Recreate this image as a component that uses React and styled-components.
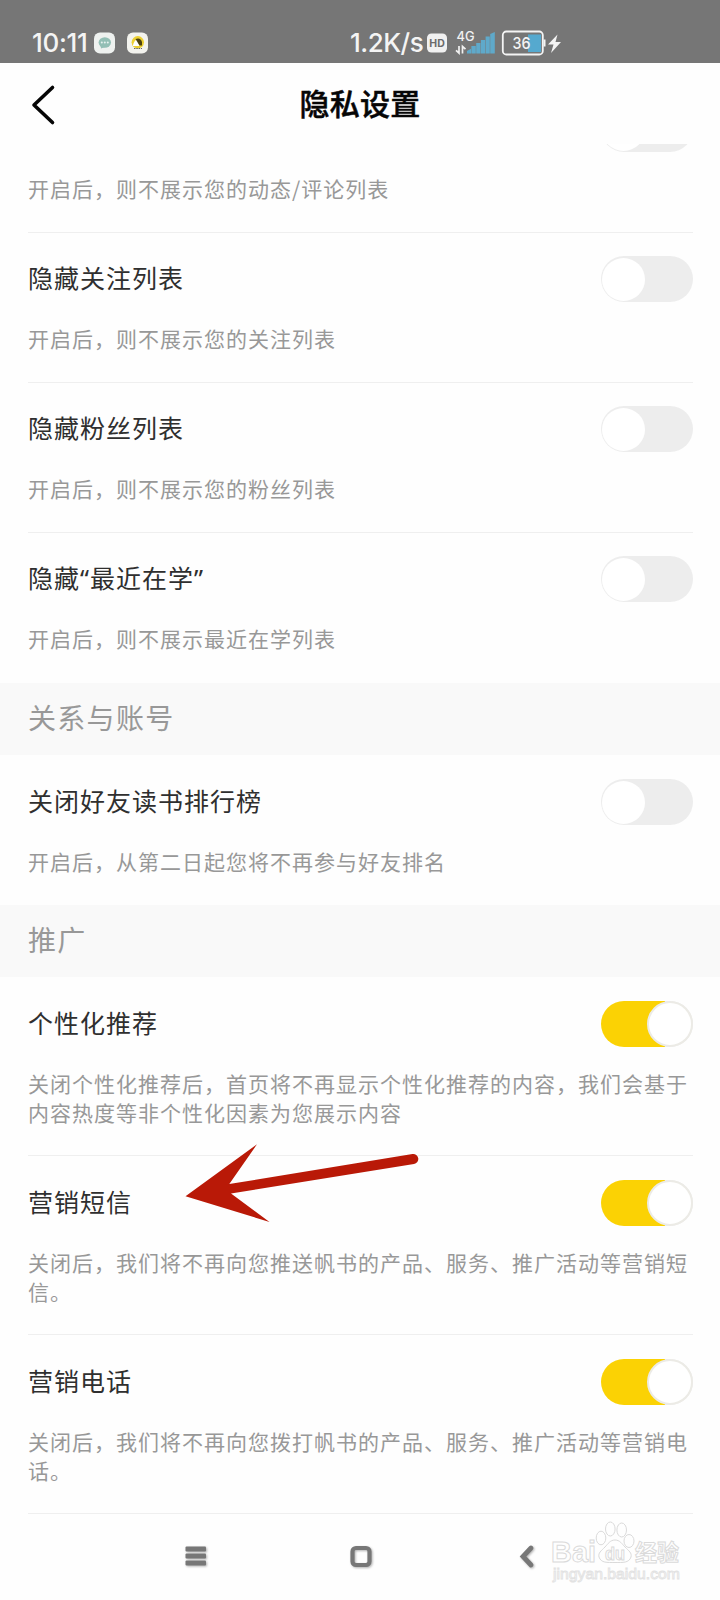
import React from 'react'
import styled, { createGlobalStyle } from 'styled-components'

const GlobalStyle = createGlobalStyle`
  * {
    box-sizing: border-box;
  }
  body {
    margin: 0;
    background: #fefefe;
    font-family: "Noto Sans CJK SC", "Noto Sans", sans-serif;
  }
`;

const Screen = styled.div`
  position: relative;
  display: flex;
  flex-direction: column;
  width: 720px;
  height: 1600px;
  overflow: hidden;
`;

const StatusBar = styled.div`
  display: flex;
  align-items: center;
  height: 63px;
  padding: 22px 0 0 32px;
  background: #767676;
  color: #f4f4f4;
  flex: none;
`;

const StatusText = styled.span`
  width: ${({ $width }) => $width}px;
  margin-left: ${({ $gap }) => $gap || 0}px;
  font-family: Inter, sans-serif;
  font-size: 26px;
  font-weight: 500;
  line-height: 40px;
  letter-spacing: ${({ $spacing }) => $spacing || 0}px;
  white-space: nowrap;
`;

const StatusIcons = styled.svg`
  display: block;
  font-family: Inter, sans-serif;
`;

const Header = styled.header`
  display: grid;
  grid-template-columns: 54px 1fr 54px;
  align-items: center;
  height: 81px;
  padding: 0 30px;
  flex: none;

  h1 {
    margin: 0;
    padding-bottom: 4px;
    color: #060606;
    font-size: 30px;
    font-weight: 500;
    line-height: 44px;
    letter-spacing: 0.3px;
    text-align: center;
    -webkit-text-stroke: 0.5px #060606;
  }
`;

const BackButton = styled.button`
  padding: 2px 0 0;
  border: 0;
  background: none;
  line-height: 0;
  text-align: left;
`;

const Viewport = styled.main`
  flex: 1;
  overflow: hidden;
`;

// the list is scrolled down, its first row is half under the header
const List = styled.div`
  margin-top: -61px;
`;

const Group = styled.div`
  --row-top: ${({ $top }) => $top || 24}px;
`;

const Row = styled.section`
  padding: 0 27px 0 28px;
`;

const RowBody = styled.div`
  padding-top: var(--row-top);
  height: ${({ $tall }) => ($tall ? 179 : 150)}px;
  border-bottom: 1px solid ${({ $last }) => ($last ? 'transparent' : '#efefef')};
`;

const RowTop = styled.div`
  display: flex;
  align-items: center;
  justify-content: space-between;
  height: 46px;
`;

const Label = styled.div`
  padding-bottom: 2px;
  color: #2f2f2f;
  font-family: "Noto Sans", "Noto Sans CJK SC", sans-serif;
  font-size: 25px;
  line-height: 36px;
  letter-spacing: 1px;
`;

const Note = styled.p`
  margin: 22px -10px 0 0;
  color: #989898;
  font-size: 21px;
  line-height: 28.7px;
  letter-spacing: 1px;
`;

const Track = styled.button`
  display: flex;
  align-items: center;
  justify-content: ${({ $on }) => ($on ? 'flex-end' : 'flex-start')};
  width: 92px;
  height: 46px;
  padding: 0 ${({ $on }) => ($on ? 0 : 1)}px;
  border: 0;
  border-radius: 23px;
  background: ${({ $on }) => ($on ? 'linear-gradient(90deg, #fbd204 70%, #ececec 70%)' : '#ededed')};
`;

const Knob = styled.span`
  width: ${({ $on }) => ($on ? 46 : 43)}px;
  height: ${({ $on }) => ($on ? 46 : 43)}px;
  border: ${({ $on }) => ($on ? '2px solid #ecebe6' : '0')};
  border-radius: 50%;
  background: #fff;
`;

const SectionTitle = styled.h2`
  height: 72px;
  margin: 0;
  padding: 0 28px;
  background: #f9f9f9;
  color: #989898;
  font-size: 28px;
  font-weight: 400;
  line-height: 68px;
  letter-spacing: 1.3px;
`;

const NavBar = styled.nav`
  position: absolute;
  left: 0;
  right: 0;
  bottom: 0;
  display: flex;
  height: 84px;
  padding: 27px 0 0 183px;

  svg {
    filter: drop-shadow(1px 1px 1px rgba(0, 0, 0, 0.3));
  }
`;

const NavIcon = styled.svg`
  width: 26px;
  height: 28px;
  margin-right: ${({ $gap }) => $gap || 0}px;
`;

const Arrow = styled.svg`
  position: absolute;
  left: 180px;
  top: 1138px;
`;

const Watermark = styled.svg`
  position: absolute;
  left: 546px;
  top: 1515px;
  font-family: "Liberation Sans", "Noto Sans CJK SC", sans-serif;
  font-weight: 700;
`;

function Toggle({ on }) {
  return (
    <Track $on={on} type="button" role="switch" aria-checked={!!on}>
      <Knob $on={on} />
    </Track>
  )
}

function Setting({ label, note, on, tall, last }) {
  return (
    <Row>
      <RowBody $tall={tall} $last={last}>
        <RowTop>
          <Label>{label}</Label>
          <Toggle on={on} />
        </RowTop>
        <Note>{note}</Note>
      </RowBody>
    </Row>
  )
}

function AppBadges() {
  return (
    <StatusIcons width="56" height="24" viewBox="93 30.5 56 24">
      <rect x="94" y="32" width="21" height="21" rx="6" fill="#eef1ef" />
      <ellipse cx="104.8" cy="42" rx="6.2" ry="5.2" fill="#93bfb5" />
      <path d="M100.5 44.500l0.500 3.500 4-1.500z" fill="#93bfb5" />
      <g fill="#e6f2ef">
        <circle cx="101.800" cy="42" r="1" />
        <circle cx="104.800" cy="42" r="1" />
        <circle cx="107.800" cy="42" r="1" />
      </g>
      <rect x="127" y="32" width="21" height="21" rx="6" fill="#f3f3ee" />
      <circle cx="137.800" cy="41.800" r="6.200" fill="#ecd032" />
      <path d="M132.800 45.500q1-5 4.200-7l2.500 7z" fill="#fff" />
      <path d="M135.500 38.500q5-2 6.500 3l0 3.500-2.500 0z" fill="#4c4210" />
      <path d="M134 48h8" stroke="#6b6b60" strokeWidth="1.200" strokeDasharray="1.500 0.800" />
    </StatusIcons>
  )
}

function SignalAndBattery() {
  return (
    <StatusIcons width="140" height="28" viewBox="425 28.500 140 28">
      <rect x="427" y="33" width="20" height="19" rx="4.500" fill="#f1f1f1" />
      <text x="437" y="46.300" fontSize="10.500" fontWeight="700" textAnchor="middle" fill="#6b6b6b">HD</text>
      <text x="456.500" y="40.500" fontSize="13" fontWeight="500" fill="#f1f1f1" textLength="18" lengthAdjust="spacingAndGlyphs">4G</text>
      <path d="M459 45.500v7l-3-2.700M462.500 53v-7l3 2.700" fill="none" stroke="#f1f1f1" strokeWidth="1.700" />
      <g fill="#5fa9ca">
        <path d="M467 50.500l4-2.300v4.800h-4z" />
        <rect x="471.400" y="45.500" width="4.400" height="7.500" />
        <rect x="476.200" y="42.500" width="4.300" height="10.500" />
        <rect x="480.900" y="39.500" width="4.300" height="13.500" />
        <rect x="485.600" y="36" width="4.200" height="17" />
        <path d="M490.200 33.500l4.600-2v21.500h-4.600z" />
      </g>
      <rect x="528" y="34" width="13" height="17.500" fill="#55a9cf" />
      <rect x="502.800" y="31" width="40" height="23" rx="3.500" fill="none" stroke="#f4f4f4" strokeWidth="1.800" />
      <path d="M544.500 39v7" stroke="#f4f4f4" strokeWidth="2" />
      <text x="512.500" y="48.800" fontSize="16.500" fontWeight="500" fill="#f4f4f4" textLength="18" lengthAdjust="spacingAndGlyphs">36</text>
      <path d="M557.500 34l-9.500 10h5.500l-2.500 8.500 10-11h-5.500z" fill="#f4f4f4" />
    </StatusIcons>
  )
}

function BaiduMark() {
  return (
    <Watermark width="150" height="80" viewBox="546 1515 150 80" fill="#fefefe" stroke="#dadada" strokeWidth="1">
      <text x="551" y="1562" fontSize="30" textLength="45" lengthAdjust="spacingAndGlyphs">Bai</text>
      <path d="M615 1540c-5 0-7 4-10 7-4 4-7 6-6 10 2 6 8 5.500 16 5.500s14 0.500 16-5.500c1-4-2-6-6-10-3-3-5-7-10-7z" />
      <ellipse cx="601" cy="1538" rx="4.800" ry="6.800" />
      <ellipse cx="610.300" cy="1529" rx="4.800" ry="7" />
      <ellipse cx="621.700" cy="1530" rx="4.800" ry="7" />
      <ellipse cx="629" cy="1541" rx="5" ry="6.500" />
      <text x="605" y="1560" fontSize="18" textLength="20" lengthAdjust="spacingAndGlyphs">du</text>
      <text x="635" y="1561" fontSize="23" textLength="44" lengthAdjust="spacingAndGlyphs">经验</text>
      <text x="553" y="1579" fontSize="15.500" fontWeight="400" stroke="#e2e2e2" strokeWidth="0.900" textLength="127" lengthAdjust="spacingAndGlyphs">jingyan.baidu.com</text>
    </Watermark>
  )
}

export default function App() {
  return (
    <Screen>
      <GlobalStyle />
      <StatusBar>
        <StatusText $width={61} $spacing={-0.3}>10:11</StatusText>
        <AppBadges />
        <StatusText $gap={201} $width={75} $spacing={-0.5}>1.2K/s</StatusText>
        <SignalAndBattery />
      </StatusBar>

      <Header>
        <BackButton type="button" aria-label="返回">
          <svg width="28" height="42" viewBox="30 84 28 42" fill="none" stroke="#060606" strokeWidth="3.600" strokeLinecap="round" strokeLinejoin="round">
            <path d="M52.500 87.500L34 105l18.500 17.500" />
          </svg>
        </BackButton>
        <h1>隐私设置</h1>
      </Header>

      <Viewport>
        <List>
          <Group $top={23}>
            <Setting note="开启后，则不展示您的动态/评论列表" />
            <Setting label="隐藏关注列表" note="开启后，则不展示您的关注列表" />
            <Setting label="隐藏粉丝列表" note="开启后，则不展示您的粉丝列表" />
            <Setting label="隐藏“最近在学”" note="开启后，则不展示最近在学列表" last />
          </Group>

          <SectionTitle>关系与账号</SectionTitle>
          <Group>
            <Setting label="关闭好友读书排行榜" note="开启后，从第二日起您将不再参与好友排名" last />
          </Group>

          <SectionTitle>推广</SectionTitle>
          <Group>
            <Setting
              label="个性化推荐"
              note="关闭个性化推荐后，首页将不再显示个性化推荐的内容，我们会基于内容热度等非个性化因素为您展示内容"
              on
              tall
            />
            <Setting
              label="营销短信"
              note="关闭后，我们将不再向您推送帆书的产品、服务、推广活动等营销短信。"
              on
              tall
            />
            <Setting
              label="营销电话"
              note="关闭后，我们将不再向您拨打帆书的产品、服务、推广活动等营销电话。"
              on
              tall
            />
          </Group>
        </List>
      </Viewport>

      <NavBar>
        <NavIcon $gap={139} viewBox="183 1548 26 28" fill="#777">
          <rect x="185.500" y="1551.500" width="20.500" height="5" rx="1" />
          <rect x="185.500" y="1558.500" width="20.500" height="5" rx="1" />
          <rect x="185.500" y="1565.500" width="20.500" height="5" rx="1" />
        </NavIcon>
        <NavIcon $gap={144} viewBox="348 1548 26 28">
          <rect x="352.500" y="1553" width="17" height="17" rx="3.500" fill="none" stroke="#777" strokeWidth="4.200" />
        </NavIcon>
        <NavIcon viewBox="518 1548 26 28">
          <path d="M531 1553l-8 8.500 8 8.500" fill="none" stroke="#777" strokeWidth="4.800" strokeLinecap="round" />
        </NavIcon>
      </NavBar>

      <BaiduMark />

      <Arrow width="245" height="90" viewBox="180 1138 245 90" fill="#b91907">
        <path d="M185.500 1196.300L257 1144.300 229.300 1184 412.500 1154a5 5 0 0 1 1.500 10L231 1193.500 269.500 1222z" />
      </Arrow>
    </Screen>
  )
}
